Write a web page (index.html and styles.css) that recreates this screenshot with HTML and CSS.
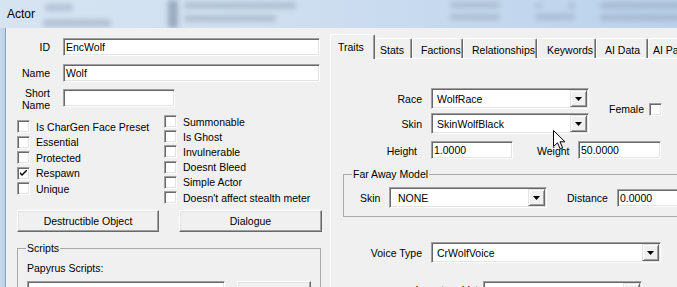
FILE: index.html
```html
<!DOCTYPE html>
<html>
<head>
<meta charset="utf-8">
<title>Actor</title>
<link rel="stylesheet" href="styles.css">
</head>
<body>
<div class="window">
  <div class="titlebar">
    <span class="blob b1"></span>
    <span class="blob b2"></span>
    <span class="blob b3"></span>
    <span class="blob b4"></span>
    <span class="blob b5"></span>
    <span class="blob b6"></span>
    <span class="blob b7"></span>
    <span class="blob b8"></span>
    <span class="blob b9"></span>
    <span class="blob b10"></span>
    <span class="blob b11"></span>
    <span class="blob b12"></span>
    <span class="title">Actor</span>
  </div>
  <div class="main">
    <div class="frame"></div>
    <div class="client">
      <div class="left">
        <div class="fields">
          <span class="lbl">ID</span>
          <div class="edit">EncWolf</div>
          <span class="lbl">Name</span>
          <div class="edit">Wolf</div>
          <span class="lbl lbl-2">Short<br>Name</span>
          <div class="edit edit-short"></div>
        </div>
        <div class="checks">
          <div class="col col-a">
            <label class="chk"><span class="box"></span>Is CharGen Face Preset</label>
            <label class="chk"><span class="box"></span>Essential</label>
            <label class="chk"><span class="box"></span>Protected</label>
            <label class="chk"><span class="box"><svg class="tick" width="7" height="7" viewBox="0 0 7 7"><path d="M0 2 L0 4 L2 6 L7 1 L7 -1 L2 4 Z" fill="#000"/></svg></span>Respawn</label>
            <label class="chk"><span class="box"></span>Unique</label>
          </div>
          <div class="col col-b">
            <label class="chk"><span class="box"></span>Summonable</label>
            <label class="chk"><span class="box"></span>Is Ghost</label>
            <label class="chk"><span class="box"></span>Invulnerable</label>
            <label class="chk"><span class="box"></span>Doesnt Bleed</label>
            <label class="chk"><span class="box"></span>Simple Actor</label>
            <label class="chk"><span class="box"></span>Doesn't affect stealth meter</label>
          </div>
        </div>
        <div class="btns">
          <div class="btn btn-a">Destructible Object</div>
          <div class="btn btn-b">Dialogue</div>
        </div>
        <fieldset class="group scripts">
          <legend>Scripts</legend>
          <div class="ps">Papyrus Scripts:</div>
          <div class="scriptrow">
            <div class="listbox"></div>
            <div class="btn btn-add"></div>
          </div>
        </fieldset>
      </div>
      <div class="tabctl">
        <div class="tabstrip">
          <div class="tab sel t-traits">Traits</div>
          <div class="tab t-stats">Stats</div>
          <div class="tab t-factions">Factions</div>
          <div class="tab t-rel">Relationships</div>
          <div class="tab t-kw">Keywords</div>
          <div class="tab t-ai">AI Data</div>
          <div class="tab t-aip">AI Packages</div>
        </div>
        <div class="page">
          <div class="rs">
            <span class="lbl">Race</span>
            <div class="combo"><span class="val">WolfRace</span><span class="arrow"><svg width="7" height="4" viewBox="0 0 7 4"><path d="M0 0H7L3.5 4Z" fill="#000"/></svg></span></div>
            <div class="female"><span>Female</span><span class="box"></span></div>
            <span class="lbl">Skin</span>
            <div class="combo"><span class="val">SkinWolfBlack</span><span class="arrow"><svg width="7" height="4" viewBox="0 0 7 4"><path d="M0 0H7L3.5 4Z" fill="#000"/></svg></span></div>
          </div>
          <div class="hw">
            <span class="lbl lbl-h">Height</span>
            <div class="edit edit-h">1.0000</div>
            <span class="lbl-w">Weight</span>
            <div class="edit edit-w">50.0000</div>
          </div>
          <fieldset class="group far">
            <legend>Far Away Model</legend>
            <div class="farrow">
              <span class="lbl-skin">Skin</span>
              <div class="combo combo-far"><span class="val val-none">NONE</span><span class="arrow"><svg width="7" height="4" viewBox="0 0 7 4"><path d="M0 0H7L3.5 4Z" fill="#000"/></svg></span></div>
              <span class="lbl-dist">Distance</span>
              <div class="edit edit-d">0.0000</div>
            </div>
          </fieldset>
          <div class="voice">
            <span class="lbl">Voice Type</span>
            <div class="combo combo-voice"><span class="val">CrWolfVoice</span><span class="arrow"><svg width="7" height="4" viewBox="0 0 7 4"><path d="M0 0H7L3.5 4Z" fill="#000"/></svg></span></div>
          </div>
          <div class="inv">
            <span class="lbl lbl-inv">Inventory List</span>
            <div class="combo combo-inv"><span class="val"></span><span class="arrow"></span></div>
          </div>
        </div>
      </div>
    </div>
  </div>
  <svg class="cursor" width="13" height="20" viewBox="0 0 13 20">
    <path d="M0.5 0.5 V16.5 L4.5 12.8 L7.2 18.8 L9.6 17.7 L7 11.8 H12 Z" fill="#fff" stroke="#000" stroke-width="1" stroke-linejoin="miter"/>
  </svg>
</div>
</body>
</html>
```

FILE: styles.css
```css
* { box-sizing: border-box; }
html, body { margin: 0; padding: 0; }
body {
  width: 677px;
  height: 287px;
  overflow: hidden;
  background: #f0f0f0;
  color: #000;
  font-family: "Liberation Sans", Arial, sans-serif;
  font-size: 10.5px;
}
.window {
  position: relative;
  width: 677px;
  height: 287px;
  overflow: hidden;
  display: flex;
  flex-direction: column;
}

/* title bar */
.titlebar {
  position: relative;
  height: 28px;
  flex: none;
  overflow: hidden;
  display: flex;
  align-items: center;
  padding-left: 7px;
  background: linear-gradient(90deg, #d6e4f2 0%, #cfdff0 40%, #c4d8ee 70%, #bcd3ec 100%);
}
.title {
  position: relative;
  font-size: 12px;
  margin-top: -1px;
}
.blob {
  position: absolute;
  background: #8c9db2;
  filter: blur(2.5px);
  opacity: 0.45;
  border-radius: 3px;
}
.b1 { left: 45px; top: 4px; width: 28px; height: 7px; }
.b2 { left: 43px; top: 19px; width: 68px; height: 8px; }
.b3 { left: 168px; top: 0; width: 10px; height: 28px; background: #6c7f97; opacity: 0.55; }
.b4 { left: 184px; top: 2px; width: 112px; height: 7px; }
.b5 { left: 184px; top: 15px; width: 92px; height: 7px; }
.b6 { left: 450px; top: 2px; width: 50px; height: 6px; }
.b7 { left: 450px; top: 14px; width: 50px; height: 6px; }
.b8 { left: 535px; top: 3px; width: 7px; height: 5px; }
.b9 { left: 568px; top: 3px; width: 7px; height: 5px; }
.b10 { left: 600px; top: 2px; width: 80px; height: 7px; }
.b11 { left: 600px; top: 14px; width: 80px; height: 7px; }
.b12 { left: 535px; top: 14px; width: 40px; height: 6px; }

/* frame */
.main {
  flex: 1;
  display: flex;
  min-height: 0;
}
.frame {
  width: 6px;
  flex: none;
  background: linear-gradient(90deg, #c9dbee, #b9cfe7);
  border-right: 1px solid #8ea3bd;
}
.client {
  flex: 1;
  display: flex;
  min-width: 0;
  background: #f0f0f0;
}

/* common controls */
.lbl {
  text-align: right;
  white-space: nowrap;
}
.edit {
  height: 18px;
  background: #fff;
  border: 1px solid;
  border-color: #a0a0a0 #fff #fff #a0a0a0;
  box-shadow: inset 1px 1px 0 #696969, inset -1px -1px 0 #e3e3e3;
  padding: 0 2px;
  display: flex;
  align-items: center;
  white-space: nowrap;
  overflow: hidden;
}
.box {
  width: 13px;
  height: 13px;
  flex: none;
  background: #fff;
  border: 1px solid;
  border-color: #a0a0a0 #fff #fff #a0a0a0;
  box-shadow: inset 1px 1px 0 #696969, inset -1px -1px 0 #e3e3e3;
  display: flex;
  align-items: center;
  justify-content: center;
}
.btn {
  height: 22px;
  display: flex;
  align-items: center;
  justify-content: center;
  background: #f0f0f0;
  border: 1px solid;
  border-color: #fff #696969 #696969 #fff;
  box-shadow: inset -1px -1px 0 #a0a0a0, inset 1px 1px 0 #e3e3e3;
  white-space: nowrap;
}
.combo {
  height: 21px;
  display: flex;
  background: #fff;
  border: 1px solid;
  border-color: #a0a0a0 #fff #fff #a0a0a0;
  box-shadow: inset 1px 1px 0 #696969, inset -1px -1px 0 #e3e3e3;
  padding: 1px;
}
.combo .val {
  flex: 1;
  display: flex;
  align-items: center;
  padding-left: 4px;
  white-space: nowrap;
}
.combo .arrow {
  width: 17px;
  flex: none;
  background: #f0f0f0;
  border: 1px solid;
  border-color: #e3e3e3 #696969 #696969 #e3e3e3;
  box-shadow: inset 1px 1px 0 #fff, inset -1px -1px 0 #a0a0a0;
  display: flex;
  align-items: center;
  justify-content: center;
}
.group {
  margin: 0;
  border: 1px solid #a9a9a9;
  min-width: 0;
}
.group legend {
  padding: 0 1px;
  line-height: 12px;
}

/* left panel */
.left {
  width: 324px;
  flex: none;
  padding-top: 10px;
}
.fields {
  display: grid;
  grid-template-columns: 44px 257px;
  column-gap: 13px;
  row-gap: 8px;
  align-items: center;
}
.lbl-2 {
  line-height: 12px;
  align-self: start;
  margin-top: -3px;
}
.edit-short {
  width: 112px;
  margin-top: -1px;
  align-self: start;
}
.checks {
  display: flex;
  padding-left: 11px;
  margin-top: 3px;
}
.col {
  display: flex;
  flex-direction: column;
}
.col-a {
  width: 147px;
  margin-top: 5px;
}
.col-a .chk { height: 15.5px; }
.col-b .chk { height: 15.2px; }
.chk {
  display: flex;
  align-items: center;
  gap: 6px;
  white-space: nowrap;
}
.tick { display: block; }
.btns {
  display: flex;
  gap: 20px;
  padding-left: 11px;
  margin-top: 5px;
}
.btn-a { width: 142px; }
.btn-b { width: 143px; }
.scripts {
  width: 304px;
  margin: 10px 0 0 11px;
  padding: 0 8px 8px 9px;
}
.scripts legend { margin-left: -1px; }
.ps {
  margin-top: 8px;
  line-height: 12px;
}
.scriptrow {
  display: flex;
  gap: 12px;
  margin-top: 7px;
}
.listbox {
  width: 198px;
  height: 40px;
  background: #fff;
  border: 1px solid;
  border-color: #a0a0a0 #fff #fff #a0a0a0;
  box-shadow: inset 1px 1px 0 #696969, inset -1px -1px 0 #e3e3e3;
}
.btn-add {
  width: 74px;
  height: 23px;
}

/* tab control */
.tabctl {
  flex: 1;
  display: flex;
  flex-direction: column;
  min-width: 0;
}
.tabstrip {
  height: 30px;
  flex: none;
  display: flex;
  align-items: flex-end;
}
.tab {
  height: 20px;
  flex: none;
  display: flex;
  align-items: center;
  padding-top: 3px;
  white-space: nowrap;
  overflow: hidden;
  background: #f0f0f0;
  border-top: 1px solid #fff;
  border-left: 1px solid #fff;
  border-right: 1px solid #696969;
  box-shadow: inset -1px 0 0 #a0a0a0;
  border-radius: 2px 2px 0 0;
}
.tab.sel {
  position: relative;
  z-index: 1;
  height: 25px;
  margin-bottom: -1px;
  padding-top: 0;
}
.t-traits { width: 45px; padding-left: 7px; }
.t-stats { width: 37px; padding-left: 4px; border-left-color: transparent; }
.t-factions { width: 51px; padding-left: 8px; }
.t-rel { width: 74px; padding-left: 8px; }
.t-kw { width: 59px; padding-left: 9px; }
.t-ai { width: 52px; padding-left: 8px; }
.t-aip { width: 80px; padding-left: 4px; }

.page {
  flex: 1;
  border-top: 1px solid #fff;
  border-left: 1px solid #fff;
  padding-top: 29px;
  min-height: 0;
}
.rs {
  display: grid;
  grid-template-columns: 91px 158px auto;
  column-gap: 9px;
  row-gap: 4px;
  align-items: center;
}
.female {
  grid-column: 3;
  grid-row: 1 / span 2;
  margin-left: 11px;
  margin-top: -4px;
  display: flex;
  align-items: center;
  gap: 5px;
}
.hw {
  display: flex;
  align-items: flex-start;
  margin-top: 7px;
}
.lbl-h {
  width: 86px;
  padding-top: 4px;
  line-height: 12px;
}
.edit-h {
  width: 82px;
  margin-left: 14px;
}
.lbl-w {
  width: 41px;
  margin-left: 24px;
  padding-top: 4px;
  line-height: 12px;
  white-space: nowrap;
}
.edit-w { width: 83px; }
.far {
  width: 420px;
  margin: 9px 0 0 12px;
  padding: 7px 0 8px 16px;
}
.far legend { margin-left: -8px; }
.farrow {
  display: flex;
  align-items: center;
}
.lbl-skin { width: 20px; }
.combo-far {
  width: 158px;
  margin-left: 9px;
}
.val-none { padding-left: 7px !important; }
.lbl-dist {
  margin-left: 20px;
  width: 41px;
  white-space: nowrap;
}
.edit-d {
  width: 80px;
  margin-left: 9px;
}
.voice {
  display: grid;
  grid-template-columns: 91px 230px;
  column-gap: 9px;
  align-items: center;
  margin-top: 25px;
}
.inv {
  display: flex;
  align-items: flex-start;
  margin-top: 18px;
}
.lbl-inv {
  width: 147px;
  padding-top: 3px;
}
.combo-inv {
  width: 159px;
  margin-left: 5px;
}

/* mouse pointer overlay */
.cursor {
  position: absolute;
  left: 553px;
  top: 130px;
  z-index: 5;
}
```
